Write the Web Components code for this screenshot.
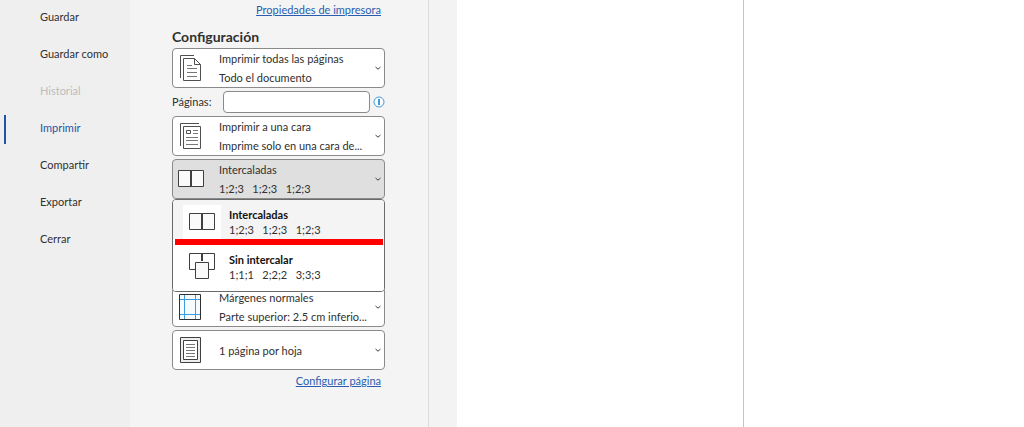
<!DOCTYPE html>
<html lang="es">
<head>
<meta charset="utf-8">
<title>Imprimir</title>
<style>
  body {
    margin: 0;
    min-height: 100vh;
    display: grid;
    background: #fff;
    color: #303030;
    font-family: Lato, "Noto Sans", sans-serif;
    font-size: 11px;
    line-height: 18px;
  }
</style>
</head>
<body>
<print-backstage>
  <side-nav slot="nav">
    <nav-item>Guardar</nav-item>
    <nav-item>Guardar como</nav-item>
    <nav-item disabled>Historial</nav-item>
    <nav-item active>Imprimir</nav-item>
    <nav-item>Compartir</nav-item>
    <nav-item>Exportar</nav-item>
    <nav-item>Cerrar</nav-item>
  </side-nav>

  <print-settings slot="settings">
    <text-link slot="top">Propiedades de impresora</text-link>
    <setting-picker icon="pages">Imprimir todas las páginas<span slot="detail">Todo el documento</span></setting-picker>
    <page-range></page-range>
    <setting-picker icon="side">Imprimir a una cara<span slot="detail">Imprime solo en una cara de...</span></setting-picker>
    <setting-picker icon="collated" open>Intercaladas<span slot="detail">1;2;3   1;2;3   1;2;3</span>
      <picker-option slot="menu" icon="collated" selected>Intercaladas<span slot="detail">1;2;3   1;2;3   1;2;3</span></picker-option>
      <picker-option slot="menu" icon="uncollated">Sin intercalar<span slot="detail">1;1;1   2;2;2   3;3;3</span></picker-option>
    </setting-picker>
    <setting-picker icon="margins">Márgenes normales<span slot="detail">Parte superior: 2.5 cm inferio...</span></setting-picker>
    <setting-picker icon="sheet">1 página por hoja</setting-picker>
    <text-link slot="bottom">Configurar página</text-link>
  </print-settings>
</print-backstage>

<script>
const ICONS = {
  pages: `<svg width="28" height="28" viewBox="0 0 28 28" fill="none" stroke="#505050">
    <path d="M3.5 24V1.5H17"/>
    <path d="M6.5 4.5H17.5L23.5 10.5V26.5H6.5Z" fill="#fff"/><path d="M17.5 4.5V10.5H23.5"/>
    <path d="M10 11.5H15M10 14.5H20M10 18.5H20M10 22.5H20" stroke="#777"/></svg>`,
  side: `<svg width="28" height="28" viewBox="0 0 28 28" fill="none" stroke="#505050">
    <path d="M3.5 24V1.5H22"/>
    <path d="M6.5 4.5H23.5V26.5H6.5Z" fill="#fff"/><path d="M9.5 8.5H13.5V11.5H9.5Z"/>
    <path d="M16 8.5H21M16 11.5H21M9 15.5H21M9 18.5H21M9 22.5H21" stroke="#777"/></svg>`,
  collated: `<svg width="28" height="28" viewBox="0 0 28 28" fill="#fafafa" stroke="#404040">
    <path d="M1.5 5.5H26.5V21.5H1.5Z"/><path d="M14 5V22" stroke-width="2"/></svg>`,
  uncollated: `<svg width="28" height="28" viewBox="0 0 28 28" fill="none" stroke="#404040">
    <path d="M7 16.5H1.5V0.5H26.5V16.5H21"/><path d="M14 0V8" stroke-width="2"/>
    <path d="M7.5 9.5H20.5V25.5H7.5Z" fill="#fafafa"/></svg>`,
  margins: `<svg width="28" height="28" viewBox="0 0 28 28" fill="none" stroke="#303030">
    <path d="M2.5 1.5H23.5V26.5H2.5Z" fill="#f6fbff"/>
    <path d="M7.5 2V26M18.5 2V26M3 6.5H23M3 21.5H23" stroke="#3d9be0"/></svg>`,
  sheet: `<svg width="28" height="28" viewBox="0 0 28 28" fill="none" stroke="#404040">
    <path d="M3.5 1.5H23.5V26.5H3.5Z" fill="#eee"/><path d="M6.5 4.5H20.5V23.5H6.5Z" fill="#fff"/>
    <path d="M9 8.5H18M9 11.5H18M9 14.5H18M9 17.5H18M9 20.5H18" stroke="#777"/></svg>`
};

class PrintBackstage extends HTMLElement {
  constructor() {
    super();
    this.attachShadow({ mode: 'open' });
    this.shadowRoot.innerHTML = `
      <style>
        :host {
          display: grid;
          grid-template-columns: 130px 298px 29px minmax(0, 287px) minmax(0, 1fr);
        }
        .gutter { background: #f3f3f3; border-left: 1px solid #dcdcdc; }
        .paper { border-right: 1px solid #c6c6c6; }
      </style>
      <slot name="nav"></slot>
      <slot name="settings"></slot>
      <div class="gutter"></div>
      <main class="paper"></main>
    `;
  }
}

class SideNav extends HTMLElement {
  constructor() {
    super();
    this.attachShadow({ mode: 'open' });
    this.shadowRoot.innerHTML = `
      <style>
        :host { display: block; background: #efefef; }
        nav { display: flex; flex-direction: column; }
      </style>
      <nav><slot></slot></nav>
    `;
  }
}

class NavItem extends HTMLElement {
  constructor() {
    super();
    this.attachShadow({ mode: 'open' });
    this.shadowRoot.innerHTML = `
      <style>
        :host { display: flex; align-items: center; height: 37px; padding-left: 4px; }
        .bar { width: 2px; height: 29px; }
        button {
          flex: 1;
          border: 0;
          padding: 0 0 3px 34px;
          background: none;
          color: inherit;
          font: inherit;
          text-align: left;
        }
        :host([active]) { color: #1f55a5; }
        :host([active]) .bar { background: #1f55a5; }
        :host([disabled]) { color: #bcbcbc; }
      </style>
      <span class="bar"></span>
      <button type="button"><slot></slot></button>
    `;
    this.shadowRoot.querySelector('button').disabled = this.hasAttribute('disabled');
  }
}

class PrintSettings extends HTMLElement {
  constructor() {
    super();
    this.attachShadow({ mode: 'open' });
    this.shadowRoot.innerHTML = `
      <style>
        :host { display: block; background: #f4f4f4; padding: 1px 43px 24px 42px; }
        h2 { margin: 8px 0 1px; font-size: 14px; line-height: 20px; font-weight: 700; }
        .list { display: flex; flex-direction: column; gap: 3px; margin-bottom: 2px; }
      </style>
      <slot name="top"></slot>
      <h2>Configuración</h2>
      <div class="list"><slot></slot></div>
      <slot name="bottom"></slot>
    `;
  }
}

class TextLink extends HTMLElement {
  constructor() {
    super();
    this.attachShadow({ mode: 'open' });
    this.shadowRoot.innerHTML = `
      <style>
        :host { display: block; padding-right: 4px; text-align: right; }
        a { color: #2a5db0; }
      </style>
      <a href="#"><slot></slot></a>
    `;
  }
}

class SettingPicker extends HTMLElement {
  constructor() {
    super();
    this.attachShadow({ mode: 'open' });
    this.shadowRoot.innerHTML = `
      <style>
        :host { display: block; position: relative; }
        /* room for the rows under the open menu */
        :host([open]) { margin-bottom: 85px; }
        button {
          display: flex;
          align-items: center;
          box-sizing: border-box;
          width: 100%;
          height: 40px;
          padding: 0 2px 0 4px;
          border: 1px solid #8a8a8a;
          border-radius: 4px;
          background: #fff;
          color: inherit;
          font: inherit;
          line-height: 19px;
          text-align: left;
        }
        :host([open]) button { background: #dfdfdf; }
        .text { flex: 1; min-width: 0; padding-left: 14px; }
        .text span { display: block; }
        .text .detail { white-space: pre; }
        .menu {
          position: absolute;
          z-index: 1;
          top: 40px;
          left: 0;
          right: 0;
          border: 1px solid #6a6a6a;
          border-radius: 4px;
          background: #fff;
          overflow: hidden;
        }
        .menu[hidden] { display: none; }
      </style>
      <button type="button" aria-haspopup="listbox">
        ${ICONS[this.getAttribute('icon')]}
        <span class="text"><span><slot></slot></span><span class="detail"><slot name="detail"></slot></span></span>
        <svg width="8" height="8" viewBox="0 0 8 8" fill="none" stroke="#404040"><path d="M1.5 3L4 5.2L6.5 3"/></svg>
      </button>
      <div class="menu" role="listbox" hidden><slot name="menu"></slot></div>
    `;
    const open = this.hasAttribute('open');
    this.button = this.shadowRoot.querySelector('button');
    this.menu = this.shadowRoot.querySelector('.menu');
    this.button.setAttribute('aria-expanded', open);
    this.menu.hidden = !open;
    this.button.addEventListener('click', () => {
      this.menu.hidden = !this.menu.hidden;
      this.button.setAttribute('aria-expanded', !this.menu.hidden);
    });
  }
}

class PickerOption extends HTMLElement {
  constructor() {
    super();
    this.attachShadow({ mode: 'open' });
    this.shadowRoot.innerHTML = `
      <style>
        :host { display: block; }
        button {
          display: flex;
          align-items: center;
          box-sizing: border-box;
          width: 100%;
          height: 46px;
          padding: 0 0 2px 10px;
          border: 0;
          background: #fff;
          color: inherit;
          font: inherit;
          line-height: 15px;
          text-align: left;
        }
        .icon { display: flex; padding: 3px 5px; background: #fff; }
        .text { padding-left: 8px; }
        .text span { display: block; }
        .text .detail { white-space: pre; }
        .name { color: #111; font-weight: 700; }
        .mark { display: none; height: 6px; margin: 0 1px 0 2px; background: #fe0000; }
        :host([selected]) button { height: 39px; padding-top: 5px; padding-bottom: 0; background: #f4f4f4; }
        :host([selected]) .mark { display: block; }
      </style>
      <button type="button" role="option">
        <span class="icon">${ICONS[this.getAttribute('icon')]}</span>
        <span class="text"><span class="name"><slot></slot></span><span class="detail"><slot name="detail"></slot></span></span>
      </button>
      <div class="mark"></div>
    `;
    this.shadowRoot.querySelector('button').setAttribute('aria-selected', this.hasAttribute('selected'));
  }
}

class PageRange extends HTMLElement {
  constructor() {
    super();
    this.attachShadow({ mode: 'open' });
    this.shadowRoot.innerHTML = `
      <style>
        :host { display: grid; grid-template-columns: 48px 1fr 12px; align-items: center; gap: 3px; height: 22px; }
        input {
          box-sizing: border-box;
          width: 100%;
          height: 22px;
          margin: 0;
          padding: 0 4px;
          border: 1px solid #8a8a8a;
          border-radius: 4px;
          background: #fff;
          font: inherit;
        }
        svg { display: block; }
      </style>
      <label for="range">Páginas:</label>
      <input id="range" type="text">
      <svg width="12" height="12" viewBox="0 0 12 12" fill="#fff" stroke="#3f9bdc">
        <circle cx="6" cy="6" r="5"/><path d="M6 3V9" stroke-width="2"/>
      </svg>
    `;
  }
}

customElements.define('print-backstage', PrintBackstage);
customElements.define('side-nav', SideNav);
customElements.define('nav-item', NavItem);
customElements.define('print-settings', PrintSettings);
customElements.define('text-link', TextLink);
customElements.define('setting-picker', SettingPicker);
customElements.define('picker-option', PickerOption);
customElements.define('page-range', PageRange);
</script>
</body>
</html>
